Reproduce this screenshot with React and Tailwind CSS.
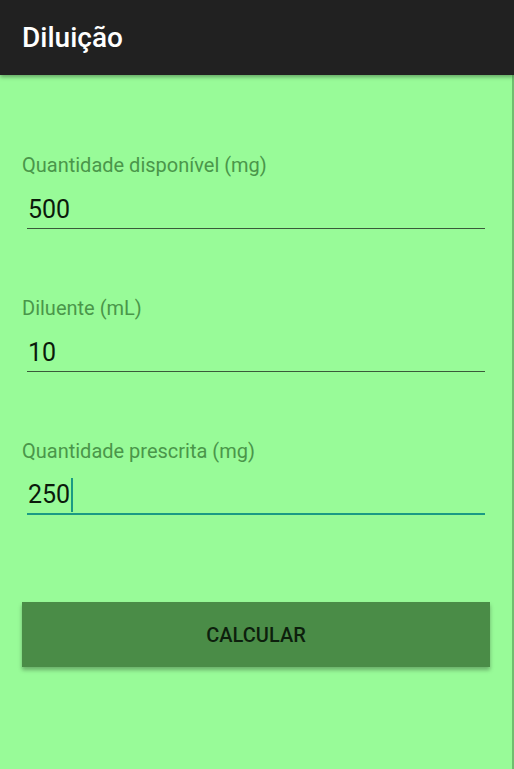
export default function App() {
  return (
    <div className="flex h-[769px] w-[514px] flex-col bg-[#98fb98] font-['Roboto',sans-serif]">
      <header className="z-10 flex h-[75px] shrink-0 items-center bg-[#212121] px-[22px] shadow-[0_2px_4px_rgba(0,0,0,0.35)]">
        <h1 className="text-[28px] font-medium leading-[32px] text-white">Diluição</h1>
      </header>

      <main className="flex flex-1 flex-col border-r-2 border-[#6fbf6f] pl-[22px] pr-[27px] pt-[78px]">
        <Field label="Quantidade disponível (mg)" value="500" />
        <Field label="Diluente (mL)" value="10" />
        <Field label="Quantidade prescrita (mg)" value="250" focused />

        <button className="mr-[-5px] mt-[20px] h-[65px] bg-[#4a8c47] text-[20px] font-medium text-[#0d1f0d] shadow-[0_3px_4px_rgba(0,0,0,0.3)]">
          CALCULAR
        </button>
      </main>
    </div>
  );
}

function Field({ label, value, focused }) {
  return (
    <div className="mb-[67px] flex flex-col">
      <label className="h-[24px] text-[20px] leading-[24px] text-[#4a964a]">
        {label}
      </label>
      <div
        className={
          focused
            ? "ml-[5px] mt-[10px] flex h-[42px] items-center border-b-2 border-[#1a9a84] pl-[1px] pt-[4px]"
            : "ml-[5px] mt-[10px] flex h-[42px] items-center border-b border-[#3a5a3a] pl-[1px] pt-[4px]"
        }
      >
        <span className="text-[25px] text-[#0b1a0b]">{value}</span>
        {focused && <span className="ml-[1px] h-[34px] w-[2px] bg-[#1a9a84]" />}
      </div>
    </div>
  );
}
